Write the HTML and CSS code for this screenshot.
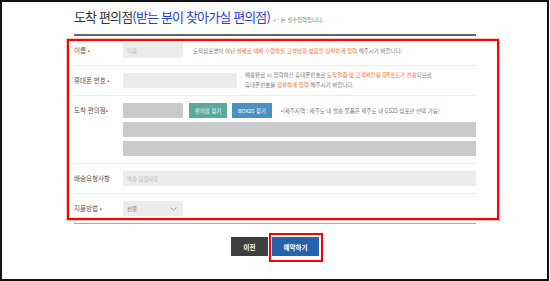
FILE: index.html
```html
<!DOCTYPE html>
<html lang="ko">
<head>
  <meta charset="UTF-8">
  <meta name="viewport" content="width=device-width, initial-scale=1.0">
  <title>도착 편의점</title>
  <link rel="stylesheet" href="styles.css">
</head>
<body>
  <div class="frame">
    <div class="content">
      <div class="page-title">
        <h2>도착 편의점<span class="blue">(받는 분이 찾아가실 편의점)</span></h2>
        <span class="req-note"><span class="dot">•</span> - 는 필수입력입니다.</span>
      </div>

      <div class="form">
        <div class="highlight"></div>

        <div class="row">
          <div class="label">이름 <span class="dot">•</span></div>
          <div class="field">
            <input type="text" class="input w-short" placeholder="이름">
            <p class="hint">도착점포명이 아닌 <em>실제로 택배 수령하실 고객님의 성함을 정확하게 입력</em> 해주시기 바랍니다.</p>
          </div>
        </div>

        <div class="row">
          <div class="label">휴대폰 번호 <span class="dot">•</span></div>
          <div class="field">
            <input type="text" class="input w-mid">
            <p class="hint two-line">배송완료 시 입력하신 휴대폰번호로 <em>도착알림 및 고객확인용 QR코드가 전송</em>되므로<br>휴대폰번호를 <em>정확하게 입력</em> 해주시기 바랍니다.</p>
          </div>
        </div>

        <div class="row">
          <div class="label">도착 편의점<span class="dot">•</span></div>
          <div class="field stack">
            <div class="line">
              <div class="box w-short"></div>
              <button class="btn-small teal">편의점 찾기</button>
              <button class="btn-small sky">BOX25 찾기</button>
              <p class="hint"><span class="dot">•</span>(제주지역 : 제주도 내 발송 물품은 제주도 내 GS25 점포만 선택 가능)</p>
            </div>
            <div class="box"></div>
            <div class="box"></div>
          </div>
        </div>

        <div class="row">
          <div class="label">배송요청사항</div>
          <div class="field">
            <input type="text" class="input w-full" placeholder="배송 요청사항">
          </div>
        </div>

        <div class="row last">
          <div class="label">지불방법 <span class="dot">•</span></div>
          <div class="field">
            <div class="select w-short">
              <span>선불</span>
              <svg width="7" height="4" viewBox="0 0 7 4"><path d="M0.5 0.5 L3.5 3.3 L6.5 0.5" fill="none" stroke="#888" stroke-width="0.8"/></svg>
            </div>
          </div>
        </div>
      </div>

      <div class="actions">
        <button class="btn btn-dark">이전</button>
        <button class="btn btn-blue">예약하기</button>
      </div>
    </div>
  </div>
</body>
</html>
```

FILE: styles.css
```css
body {
  margin: 0;
  font-family: "Noto Sans CJK KR", "Noto Sans", sans-serif;
  background-color: #fff;
  color: #555;
}
.frame {
  width: 549px;
  height: 281px;
  box-sizing: border-box;
  border: 2px solid #111;
}
.content {
  width: 402px;
  margin-left: 72px;
}
.page-title {
  display: flex;
  align-items: baseline;
  padding: 5px 0 7px;
  height: 20px;
  border-bottom: 2px solid #666;
}
.page-title h2 {
  margin: 0;
  font-size: 13px;
  line-height: 20px;
  font-weight: 400;
  letter-spacing: -0.85px;
  color: #333;
}
.page-title .blue {
  color: #2243d6;
}
.req-note {
  margin-left: 4px;
  font-size: 5.4px;
  color: #777;
}
.dot {
  color: #f0503c;
}
.form {
  position: relative;
  border-bottom: 1px solid #aaa;
}
.highlight {
  position: absolute;
  left: -7px;
  top: 3px;
  width: 432px;
  height: 181px;
  box-sizing: border-box;
  border: 2px solid #f00;
  box-shadow: 0 0 0 1px rgba(255, 80, 80, 0.35);
  pointer-events: none;
}
.row {
  display: flex;
  align-items: center;
  padding: 7px 0;
  border-bottom: 1px solid #eee;
}
.row.last {
  border-bottom: none;
}
.row .label {
  width: 49px;
  flex-shrink: 0;
  font-size: 6.5px;
  color: #555;
  align-self: flex-start;
  line-height: 15px;
}
.field {
  display: flex;
  align-items: center;
  flex: 1;
}
.field.stack {
  flex-direction: column;
  align-items: stretch;
  gap: 4px;
}
.line {
  display: flex;
  align-items: center;
}
.input, .select {
  height: 15px;
  box-sizing: border-box;
  border: none;
  background-color: #ececec;
  padding: 0 4px;
  font-family: inherit;
  font-size: 5.4px;
  color: #666;
  outline: none;
}
.input::placeholder {
  color: #b9b9b9;
}
.w-short {
  width: 60px;
  flex-shrink: 0;
}
.w-mid {
  width: 114px;
}
.w-full {
  width: 100%;
}
.box {
  height: 15px;
  background-color: #cacaca;
}
.hint {
  margin: 0 0 0 10px;
  font-size: 5.5px;
  line-height: 10px;
  color: #777;
}
.hint em {
  font-style: normal;
  color: #f26a2e;
}
.hint.two-line {
  margin: -3px 0 -2px 8px;
}
.line .hint {
  margin-left: 9px;
}
.btn-small {
  height: 15px;
  border: none;
  margin-left: 6px;
  padding: 0;
  font-family: inherit;
  font-size: 5.4px;
  color: #fff;
}
.btn-small.teal {
  width: 38px;
  background-color: #5ba99d;
}
.btn-small.sky {
  width: 40px;
  margin-left: 5px;
  background-color: #4b90c1;
}
.select {
  display: flex;
  align-items: center;
  justify-content: space-between;
  padding: 0 6px 0 4px;
}
.actions {
  display: flex;
  justify-content: center;
  gap: 4px;
  margin-top: 13px;
}
.btn {
  height: 19px;
  border: none;
  padding: 0;
  font-family: inherit;
  font-size: 6.5px;
  font-weight: 700;
  color: #fff;
  cursor: pointer;
}
.btn-dark {
  width: 37px;
  background-color: #3e3e3e;
}
.btn-blue {
  position: relative;
  width: 47px;
  background-color: #2362ad;
}
.btn-blue::after {
  content: "";
  position: absolute;
  left: -3px;
  top: -4px;
  right: -4px;
  bottom: -6px;
  border: 2px solid #f00;
}
```
